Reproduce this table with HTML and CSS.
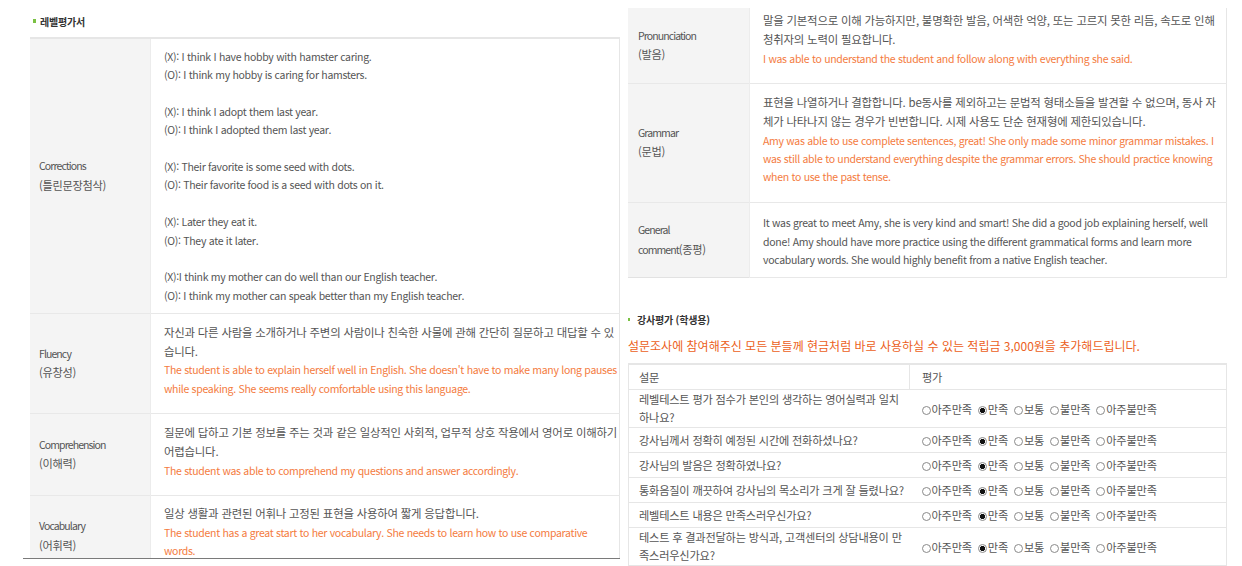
FILE: index.html
```html
<!DOCTYPE html>
<html lang="ko">
<head>
    <meta charset="UTF-8">
    <meta name="viewport" content="width=device-width, initial-scale=1.0">
    <title>레벨평가서</title>
    <link rel="stylesheet" href="styles.css">
</head>
<body>
<div class="page">
    <!-- 레벨평가서 (왼쪽) -->
    <section class="panel panel-left">
        <h3 class="sec-title">레벨평가서</h3>
        <table class="eval">
            <tr>
                <th>Corrections<br><span class="ko">(틀린문장첨삭)</span></th>
                <td>
                    <p>(X): I think I have hobby with hamster caring.<br>(O): I think my hobby is caring for hamsters.</p>
                    <p>(X): I think I adopt them last year.<br>(O): I think I adopted them last year.</p>
                    <p>(X): Their favorite is some seed with dots.<br>(O): Their favorite food is a seed with dots on it.</p>
                    <p>(X): Later they eat it.<br>(O): They ate it later.</p>
                    <p>(X):I think my mother can do well than our English teacher.<br>(O): I think my mother can speak better than my English teacher.</p>
                </td>
            </tr>
            <tr>
                <th>Fluency<br><span class="ko">(유창성)</span></th>
                <td>
                    <span class="ko">자신과 다른 사람을 소개하거나 주변의 사람이나 친숙한 사물에 관해 간단히 질문하고 대답할 수 있습니다.</span>
                    <span class="cmt">The student is able to explain herself well in English. She doesn't have to make many long pauses while speaking. She seems really comfortable using this language.</span>
                </td>
            </tr>
            <tr>
                <th>Comprehension<br><span class="ko">(이해력)</span></th>
                <td>
                    <span class="ko">질문에 답하고 기본 정보를 주는 것과 같은 일상적인 사회적, 업무적 상호 작용에서 영어로 이해하기 어렵습니다.</span>
                    <span class="cmt">The student was able to comprehend my questions and answer accordingly.</span>
                </td>
            </tr>
            <tr>
                <th>Vocabulary<br><span class="ko">(어휘력)</span></th>
                <td>
                    <span class="ko">일상 생활과 관련된 어휘나 고정된 표현을 사용하여 짧게 응답합니다.</span>
                    <span class="cmt">The student has a great start to her vocabulary. She needs to learn how to use comparative words.</span>
                </td>
            </tr>
        </table>
    </section>

    <!-- 레벨평가서 이어서 + 강사평가 (오른쪽) -->
    <section class="panel panel-right">
        <table class="eval eval-cont">
            <tr class="first">
                <th>Pronunciation<br><span class="ko">(발음)</span></th>
                <td>
                    <span class="ko">말을 기본적으로 이해 가능하지만, 불명확한 발음, 어색한 억양, 또는 고르지 못한 리듬, 속도로 인해 청취자의 노력이 필요합니다.</span>
                    <span class="cmt">I was able to understand the student and follow along with everything she said.</span>
                </td>
            </tr>
            <tr>
                <th>Grammar<br><span class="ko">(문법)</span></th>
                <td>
                    <span class="ko">표현을 나열하거나 결합합니다. be동사를 제외하고는 문법적 형태소들을 발견할 수 없으며, 동사 자체가 나타나지 않는 경우가 빈번합니다. 시제 사용도 단순 현재형에 제한되있습니다.</span>
                    <span class="cmt">Amy was able to use complete sentences, great! She only made some minor grammar mistakes. I was still able to understand everything despite the grammar errors. She should practice knowing when to use the past tense.</span>
                </td>
            </tr>
            <tr class="last">
                <th>General<br>comment<span class="ko">(종평)</span></th>
                <td>It was great to meet Amy, she is very kind and smart! She did a good job explaining herself, well done! Amy should have more practice using the different grammatical forms and learn more vocabulary words. She would highly benefit from a native English teacher.</td>
            </tr>
        </table>

        <h3 class="sec-title sec-title-survey">강사평가 (학생용)</h3>
        <p class="notice">설문조사에 참여해주신 모든 분들께 현금처럼 바로 사용하실 수 있는 적립금 3,000원을 추가해드립니다.</p>

        <table class="survey">
            <tr>
                <th class="q">설문</th>
                <th class="rate">평가</th>
            </tr>
            <tr>
                <td class="q">레벨테스트 평가 점수가 본인의 생각하는 영어실력과 일치하나요?</td>
                <td class="rate">
                    <label><input type="radio" name="q1">아주만족</label>
                    <label><input type="radio" name="q1" checked>만족</label>
                    <label><input type="radio" name="q1">보통</label>
                    <label><input type="radio" name="q1">불만족</label>
                    <label><input type="radio" name="q1">아주불만족</label>
                </td>
            </tr>
            <tr>
                <td class="q">강사님께서 정확히 예정된 시간에 전화하셨나요?</td>
                <td class="rate">
                    <label><input type="radio" name="q2">아주만족</label>
                    <label><input type="radio" name="q2" checked>만족</label>
                    <label><input type="radio" name="q2">보통</label>
                    <label><input type="radio" name="q2">불만족</label>
                    <label><input type="radio" name="q2">아주불만족</label>
                </td>
            </tr>
            <tr>
                <td class="q">강사님의 발음은 정확하였나요?</td>
                <td class="rate">
                    <label><input type="radio" name="q3">아주만족</label>
                    <label><input type="radio" name="q3" checked>만족</label>
                    <label><input type="radio" name="q3">보통</label>
                    <label><input type="radio" name="q3">불만족</label>
                    <label><input type="radio" name="q3">아주불만족</label>
                </td>
            </tr>
            <tr>
                <td class="q">통화음질이 깨끗하여 강사님의 목소리가 크게 잘 들렸나요?</td>
                <td class="rate">
                    <label><input type="radio" name="q4">아주만족</label>
                    <label><input type="radio" name="q4" checked>만족</label>
                    <label><input type="radio" name="q4">보통</label>
                    <label><input type="radio" name="q4">불만족</label>
                    <label><input type="radio" name="q4">아주불만족</label>
                </td>
            </tr>
            <tr>
                <td class="q">레벨테스트 내용은 만족스러우신가요?</td>
                <td class="rate">
                    <label><input type="radio" name="q5">아주만족</label>
                    <label><input type="radio" name="q5" checked>만족</label>
                    <label><input type="radio" name="q5">보통</label>
                    <label><input type="radio" name="q5">불만족</label>
                    <label><input type="radio" name="q5">아주불만족</label>
                </td>
            </tr>
            <tr>
                <td class="q">테스트 후 결과전달하는 방식과, 고객센터의 상담내용이 만족스러우신가요?</td>
                <td class="rate">
                    <label><input type="radio" name="q6">아주만족</label>
                    <label><input type="radio" name="q6" checked>만족</label>
                    <label><input type="radio" name="q6">보통</label>
                    <label><input type="radio" name="q6">불만족</label>
                    <label><input type="radio" name="q6">아주불만족</label>
                </td>
            </tr>
        </table>
    </section>
</div>
</body>
</html>
```

FILE: styles.css
```css
/* 레벨평가서 / 강사평가 */
body {
    font-family: "Noto Sans CJK KR", "Malgun Gothic", sans-serif;
    font-size: 10.5px;
    color: #555;
    margin: 0;
    background: #fff;
    overflow: hidden;
}

/* 한글 문장은 조금 크게 */
.ko {
    font-size: 11.4px;
    letter-spacing: -0.2px;
}

.page {
    display: flex;
    gap: 8px;
    height: 566px;
    overflow: hidden;
}

.panel-left {
    width: 597px;
    height: 558px;
    margin-left: 23px;
    overflow: hidden;
    border-bottom: 1px solid #7a7a7a;
}

.panel-right {
    width: 599px;
    padding-top: 8px;
}

.sec-title {
    margin: 0;
    padding-left: 17px;
    font-size: 10px;
    font-weight: bold;
    letter-spacing: -0.2px;
    color: #333;
    line-height: 14px;
    position: relative;
}

.sec-title::before {
    content: "";
    position: absolute;
    left: 10px;
    top: 4px;
    width: 3px;
    height: 4px;
    background: #7ac143;
}

.panel-left .sec-title {
    margin: 15px 0 8px;
}

/* 평가 테이블 */
.eval {
    width: 590px;
    margin-left: 7px;
    border-collapse: collapse;
    border-top: 2px solid #e6e6e6;
    border-right: 1px solid #e6e6e6;
    line-height: 18.4px;
}

.eval th {
    width: 111px;
    padding: 0 0 0 9px;
    background: #f4f4f4;
    border-right: 1px solid #ececec;
    font-weight: normal;
    text-align: left;
    letter-spacing: -0.9px;
    vertical-align: middle;
}

.eval th .ko {
    font-size: 11.2px;
    letter-spacing: -0.3px;
}

.eval td {
    padding: 8.5px 0 8px 13px;
    border-bottom: 1px solid #e8e8e8;
    letter-spacing: -0.3px;
    vertical-align: top;
}

.eval tr + tr th {
    border-top: 1px solid #e8e8e8;
}

.eval p {
    margin: 0 0 18.4px;
}

.eval p:last-child {
    margin-bottom: 0;
}

.cmt {
    display: block;
    color: #f47b3e;
    margin-bottom: 7px;
}

.eval-cont {
    width: 599px;
    margin-left: 0;
    border-top: none;
    border-bottom: 1px solid #e2e2e2;
}

.eval-cont th {
    width: 111px;
    padding-left: 10px;
}

.eval-cont td {
    padding-right: 5px;
}

.eval-cont tr.first td {
    padding-top: 3px;
}

.eval-cont tr.last td {
    padding-top: 11.5px;
}

.sec-title-survey {
    margin-top: 35px;
    padding-left: 9px;
}

.sec-title-survey::before {
    left: 0;
    top: 5px;
    width: 2px;
    height: 3px;
}

.notice {
    margin: 11px 0 9px;
    font-size: 12px;
    color: #ec5f22;
    line-height: 16px;
}

/* 설문 테이블 */
.survey {
    width: 599px;
    border-collapse: collapse;
    border-top: 2px solid #e6e6e6;
    border-left: 1px solid #e6e6e6;
    border-right: 1px solid #e6e6e6;
    font-size: 11.2px;
    letter-spacing: -0.2px;
}

.survey th,
.survey td {
    padding: 1px 10px;
    border-bottom: 1px solid #e6e6e6;
    text-align: left;
    font-weight: normal;
    vertical-align: middle;
}

.survey th {
    line-height: 22px;
}

.survey th.q {
    border-right: 1px solid #e6e6e6;
}

.survey .q {
    width: 268px;
    padding-right: 2px;
    line-height: 17.5px;
}

.survey .rate {
    padding-left: 12px;
}

.survey td.rate {
    line-height: 22px;
    white-space: nowrap;
}

.rate label {
    margin-right: 3px;
}

.rate input {
    appearance: none;
    -webkit-appearance: none;
    width: 9px;
    height: 9px;
    margin: 0 1px 0 0;
    border: 1px solid #8a8a8a;
    border-radius: 50%;
    background: #fff;
    vertical-align: -1px;
}

.rate input:checked {
    background: radial-gradient(circle, #111 0 2.4px, #fff 2.9px);
}
```
